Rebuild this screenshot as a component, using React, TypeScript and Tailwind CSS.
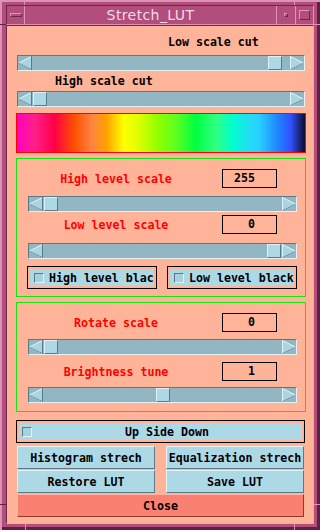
const MONO = "font-['DejaVu_Sans_Mono','Liberation_Mono',monospace] font-bold text-[11.6px]"

type TSliderProps = {
  offset: number
  className?: string
}

function ArrowLeft() {
  return (
    <svg width="14" height="14" viewBox="0 0 14 14" className="shrink-0">
      <polygon points="0.5,7 13.5,0.5 13.5,13.5" fill="#a9d4e2" />
      <line x1="0.5" y1="7" x2="13.5" y2="0.5" stroke="#e2f3f8" />
      <line x1="0.5" y1="7" x2="13.5" y2="13.5" stroke="#5b7a87" strokeDasharray="1 1" />
      <line x1="13.5" y1="0" x2="13.5" y2="14" stroke="#5b7a87" />
    </svg>
  )
}

function ArrowRight() {
  return (
    <svg width="14" height="14" viewBox="0 0 14 14" className="shrink-0">
      <polygon points="0.5,0.5 13.5,7 0.5,13.5" fill="#a9d4e2" />
      <line x1="0.5" y1="0.5" x2="13.5" y2="7" stroke="#e2f3f8" />
      <line x1="0.5" y1="0" x2="0.5" y2="14" stroke="#e2f3f8" />
      <line x1="0.5" y1="13.5" x2="13.5" y2="7" stroke="#5b7a87" strokeDasharray="1 1" />
    </svg>
  )
}

function Slider({ offset, className = '' }: TSliderProps) {
  return (
    <div
      className={`flex h-4 border border-b-[#e4f2f6] border-l-[#5b7a87] border-r-[#e4f2f6] border-t-[#5b7a87] bg-[#93b6c3] ${className}`}
    >
      <ArrowLeft />
      <div className="shrink-0" style={{ width: offset }} />
      <div className="h-[14px] w-[14px] shrink-0 border border-b-[#5b7a87] border-l-[#dff1f6] border-r-[#5b7a87] border-t-[#dff1f6] bg-[#add8e6]" />
      <div className="flex-1" />
      <ArrowRight />
    </div>
  )
}

function ValueRow({ label, value }: { label: string; value: string }) {
  return (
    <div className="flex h-[19px] items-center pl-[11px]">
      <span className={`w-[176px] text-center leading-[14px] text-[#ff0000] ${MONO}`}>
        {label}
      </span>
      <div
        className={`ml-[18px] h-[19px] w-[55px] border border-black pr-[21px] text-right leading-[17px] text-black ${MONO}`}
      >
        {value}
      </div>
    </div>
  )
}

function CheckBox() {
  return (
    <span className="h-[10px] w-[10px] shrink-0 border border-b-[#e2f3f8] border-l-[#5b7a87] border-r-[#e2f3f8] border-t-[#5b7a87] bg-[#a6d2e0]" />
  )
}

function CheckButton({ label }: { label: string }) {
  return (
    <div className="h-[23px] w-[130px] border border-black p-[2px]">
      <div className="flex h-full items-center overflow-hidden bg-[#add8e6] pl-[4px]">
        <CheckBox />
        <span className={`ml-[5px] whitespace-nowrap leading-[14px] text-black ${MONO}`}>
          {label}
        </span>
      </div>
    </div>
  )
}

function Button({ label, className = '' }: { label: string; className?: string }) {
  return (
    <div
      className={`flex h-[23px] items-center justify-center overflow-hidden whitespace-nowrap border border-b-[#5b7a87] border-l-[#e6f4f8] border-r-[#5b7a87] border-t-[#e6f4f8] bg-[#add8e6] leading-[14px] text-black ${MONO} ${className}`}
    >
      {label}
    </div>
  )
}

export default function App() {
  return (
    <div className="relative flex h-[530px] w-[320px] flex-col bg-[#b34d7b] pb-[6px] pl-[6px] pr-[6px] pt-[5px] shadow-[inset_2px_2px_0_#dc93b8,inset_-3px_-3px_0_#5e2142]">
      {/* frame resize notches */}
      <div className="absolute left-0 top-[24px] h-px w-[6px] bg-[#5e2142]" />
      <div className="absolute right-0 top-[24px] h-px w-[6px] bg-[#dc93b8]" />
      <div className="absolute left-[24px] top-0 h-[5px] w-px bg-[#dc93b8]" />
      <div className="absolute right-[25px] top-0 h-[5px] w-px bg-[#dc93b8]" />
      <div className="absolute bottom-[25px] left-0 h-px w-[6px] bg-[#5e2142]" />
      <div className="absolute bottom-[25px] right-0 h-px w-[6px] bg-[#dc93b8]" />
      <div className="absolute bottom-0 left-[25px] h-[6px] w-px bg-[#dc93b8]" />
      <div className="absolute bottom-0 right-[25px] h-[6px] w-px bg-[#dc93b8]" />

      {/* title bar */}
      <div className="flex h-[20px] shrink-0 border border-b-[#dc93b8] border-l-[#6b2747] border-r-[#dc93b8] border-t-[#6b2747]">
        <div className="flex w-[18px] shrink-0 items-center justify-center border-r border-r-[#dc93b8]">
          <span className="h-[4px] w-[12px] border border-b-[#6b2747] border-l-[#dc93b8] border-r-[#6b2747] border-t-[#dc93b8]" />
        </div>
        <div className="flex flex-1 items-center justify-center border-r border-r-[#dc93b8] font-['DejaVu_Sans',sans-serif] text-[14px] leading-none tracking-[0.4px] text-[#f4dbe8]">
          Stretch_LUT
        </div>
        <div className="flex w-[19px] shrink-0 items-center justify-center border-r border-r-[#dc93b8]">
          <span className="h-[4px] w-[4px] border border-b-[#6b2747] border-l-[#dc93b8] border-r-[#6b2747] border-t-[#dc93b8]" />
        </div>
        <div className="flex w-[17px] shrink-0 items-center justify-center">
          <span className="h-[10px] w-[11px] border border-b-[#6b2747] border-l-[#dc93b8] border-r-[#6b2747] border-t-[#dc93b8]" />
        </div>
      </div>

      {/* client area */}
      <div className="flex flex-1 flex-col border border-b-[#e6a9c6] border-l-[#6b2747] border-r-[#e6a9c6] border-t-[#6b2747] bg-[#ffb398] pl-[9px] pr-[7px]">
        <div className={`ml-[152px] mt-[9px] h-[14px] leading-[14px] text-black ${MONO}`}>
          Low scale cut
        </div>
        <Slider offset={236} className="mx-px mt-[6px]" />
        <div className={`ml-[39px] mt-[3px] h-[14px] leading-[14px] text-black ${MONO}`}>
          High scale cut
        </div>
        <Slider offset={1} className="mx-px mt-[3px]" />

        <div className="mt-[6px] h-[40px] border border-[#ff0000] bg-[linear-gradient(90deg,#ff00c4_0%,#ff2088_6%,#ff0048_13%,#ff5000_20%,#ff8444_26%,#ffa000_31%,#ffff00_37%,#e0ff00_42%,#90ff00_49%,#60ff20_55%,#00ff40_62%,#30ff80_69%,#00ffd0_75%,#20e0f0_80%,#28d0ff_84%,#2080ff_91%,#3050ff_95%,#0c0c2c_100%)]" />

        <div className="mt-[5px] flex h-[139px] flex-col border border-[#10e810] pb-[7px] pt-[10px]">
          <ValueRow label="High level scale" value="255" />
          <Slider offset={1} className="ml-[11px] mr-[8px] mt-[8px]" />
          <div className="mt-[3px]">
            <ValueRow label="Low level scale" value="0" />
          </div>
          <Slider offset={224} className="ml-[11px] mr-[8px] mt-[9px]" />
          <div className="mt-[7px] flex gap-[10px] pl-[10px]">
            <CheckButton label="High level blac" />
            <CheckButton label="Low level black" />
          </div>
        </div>

        <div className="mt-[5px] flex h-[110px] flex-col border border-[#10e810] pb-[8px] pt-[10px]">
          <ValueRow label="Rotate scale" value="0" />
          <Slider offset={1} className="ml-[11px] mr-[8px] mt-[7px]" />
          <div className="mt-[7px]">
            <ValueRow label="Brightness tune" value="1" />
          </div>
          <Slider offset={113} className="ml-[11px] mr-[8px] mt-[6px]" />
        </div>

        <div className="mr-px mt-[8px] h-[23px] border border-black p-[2px]">
          <div className="flex h-full items-center bg-[#add8e6] pl-[3px]">
            <CheckBox />
            <span className={`flex-1 text-center leading-[14px] text-black ${MONO}`}>
              Up Side Down
            </span>
          </div>
        </div>

        <div className="ml-px mr-[2px] mt-[3px] flex justify-between">
          <Button label="Histogram strech" className="w-[138px]" />
          <Button label="Equalization strech" className="w-[138px]" />
        </div>
        <div className="ml-px mr-[2px] mt-px flex justify-between">
          <Button label="Restore LUT" className="w-[138px]" />
          <Button label="Save LUT" className="w-[138px]" />
        </div>
        <div
          className={`ml-px mr-[2px] mt-px flex h-[23px] items-center justify-center border border-b-[#8b3a33] border-l-[#ffb4a4] border-r-[#8b3a33] border-t-[#ffb4a4] bg-[#fa8072] leading-[14px] text-black ${MONO}`}
        >
          Close
        </div>
      </div>
    </div>
  )
}
